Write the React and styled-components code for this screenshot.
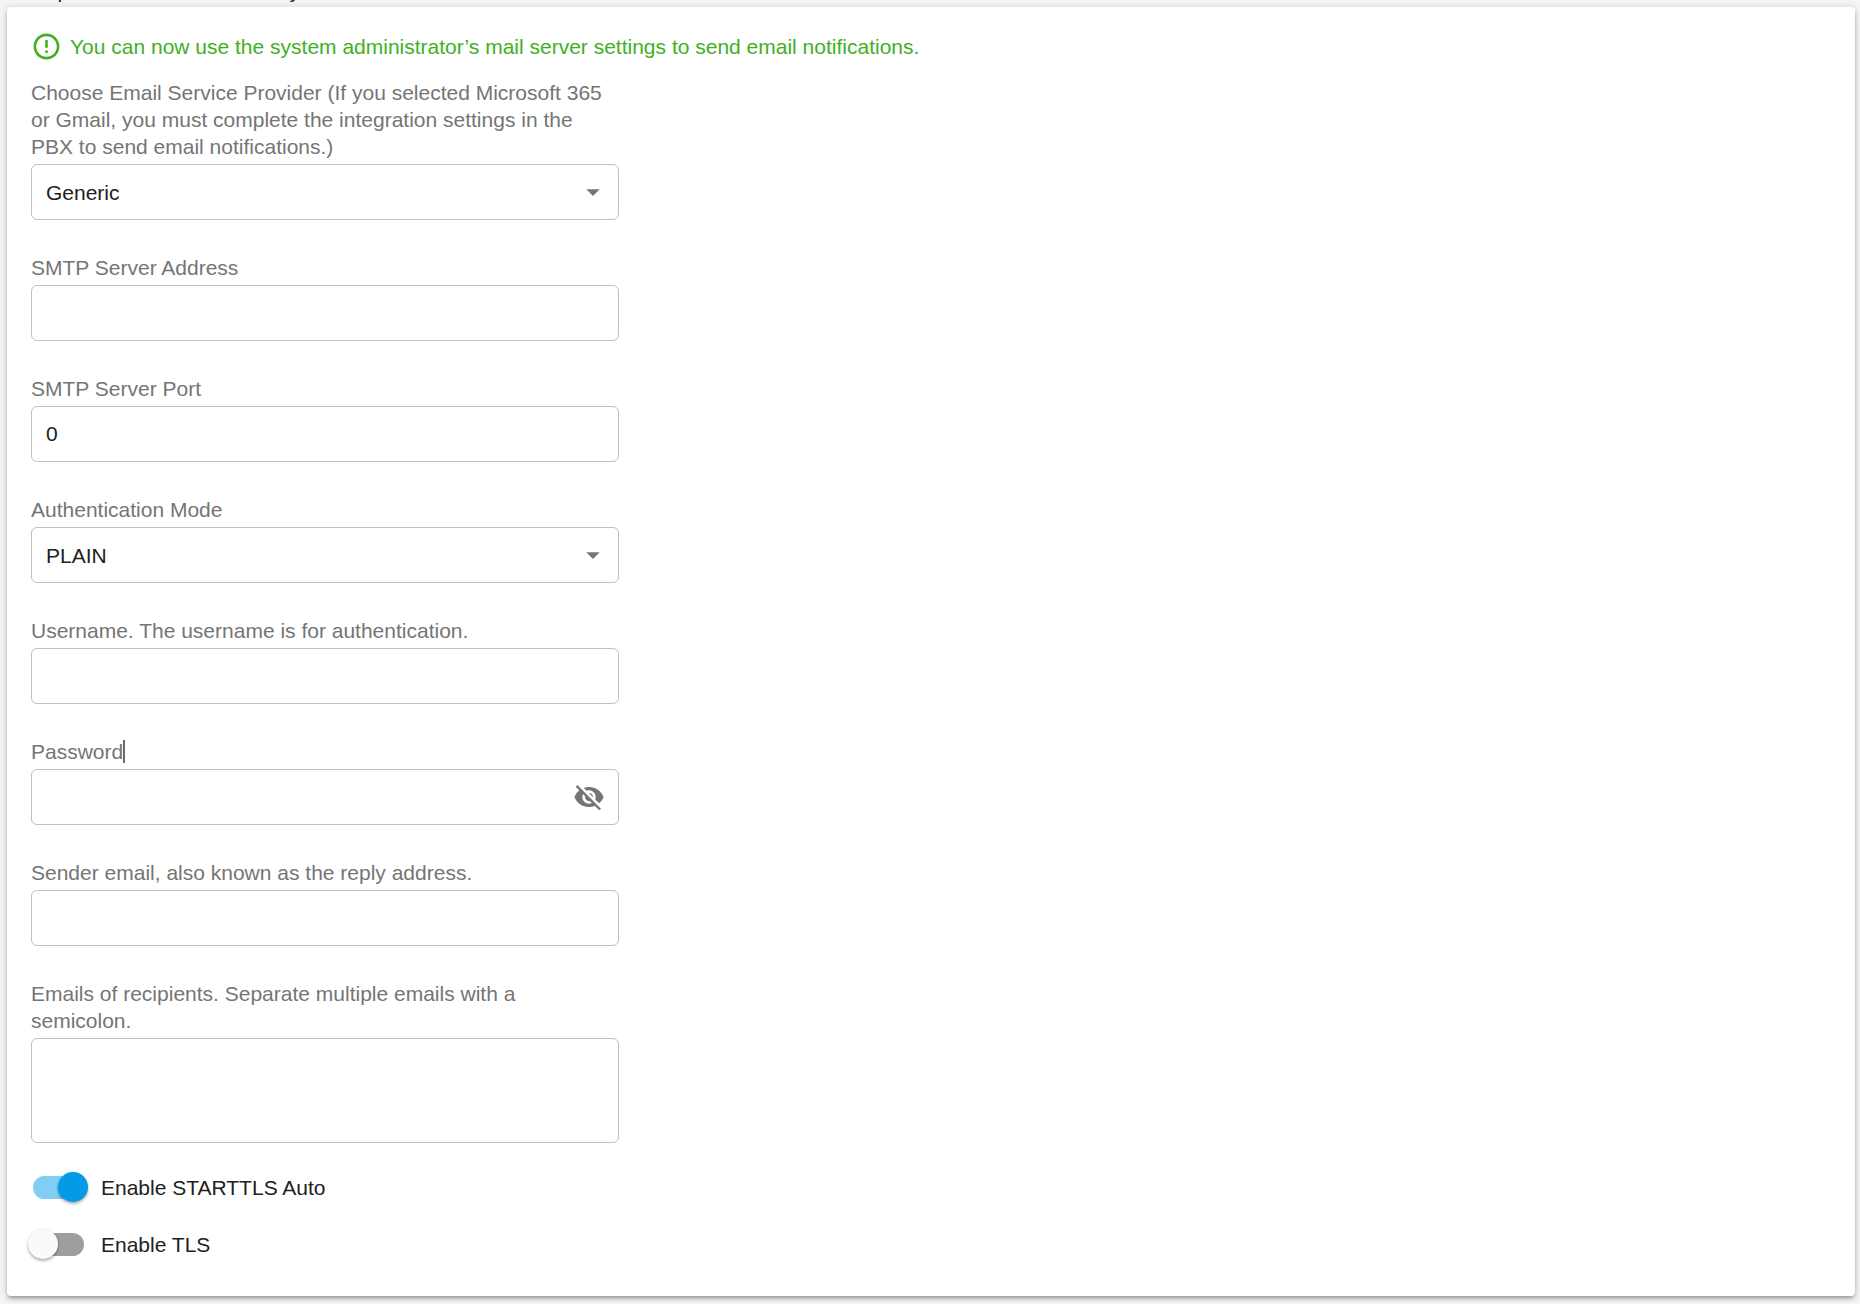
import React, { useState } from "react";
import styled, { createGlobalStyle } from "styled-components";
import { MdErrorOutline, MdVisibility, MdVisibilityOff, MdArrowDropDown } from "react-icons/md";

const GlobalStyle = createGlobalStyle`
  *, *::before, *::after { box-sizing: border-box; }
  body {
    margin: 0;
    background: #f4f5f7;
    color: #212121;
    font: 21px/27px "Liberation Sans", Arial, sans-serif;
  }
`;

const Page = styled.main`
  display: flex;
  flex-direction: column;
  overflow: hidden;
  padding: 0 5px 8px 7px;
`;

const Heading = styled.h1`
  margin: -23px 0 3px;
  padding-left: 19px;
  font-size: 21px;
  font-weight: 400;
  line-height: 27px;
  color: #1a2033;
`;

const Card = styled.form`
  display: flex;
  flex-direction: column;
  padding: 24px;
  background: #fff;
  border-radius: 4px;
  box-shadow: 0 3px 4px -1px rgba(0, 0, 0, 0.35), 0 1px 8px rgba(0, 0, 0, 0.16);
`;

const Notice = styled.p`
  display: flex;
  align-items: center;
  gap: 8px;
  margin: 0 0 17px;
  color: #3fb01f;
  svg { width: 31px; height: 31px; flex: none; }
`;

const Fields = styled.div`
  display: flex;
  flex-direction: column;
  gap: 34px;
  width: 100%;
  max-width: 588px;
`;

const Field = styled.div`
  display: flex;
  flex-direction: column;
  gap: 4px;
`;

const Label = styled.label`
  color: #757575;
`;

const Caret = styled.span`
  border-right: 2px solid #6b6b6b;
`;

const Outline = styled.div`
  display: grid;
  align-items: center;
  min-height: ${(p) => (p.$tall ? 105 : 56)}px;
  border: 1px solid #c0c0c0;
  border-radius: 6px;
  &:focus-within { border-color: #039be5; }
  > * { grid-area: 1 / 1; }
`;

const controlStyle = `
  width: 100%;
  height: 54px;
  margin: 0;
  padding: 0 14px;
  border: 0;
  outline: 0;
  background: transparent;
  color: #212121;
  font: inherit;
`;

const Input = styled.input`${controlStyle}`;
const Select = styled.select`
  ${controlStyle}
  appearance: none;
`;
const TextArea = styled.textarea`
  ${controlStyle}
  display: block;
  height: 103px;
  padding: 12px 14px;
  resize: none;
`;

const Arrow = styled(MdArrowDropDown)`
  justify-self: end;
  width: 32px;
  height: 32px;
  margin-right: 9px;
  color: #757575;
  pointer-events: none;
`;

const IconButton = styled.button`
  display: flex;
  justify-self: end;
  margin-right: 13px;
  padding: 0;
  border: 0;
  background: none;
  color: #757575;
  cursor: pointer;
  svg { width: 32px; height: 32px; }
`;

const Switches = styled.div`
  display: flex;
  flex-direction: column;
  align-items: flex-start;
  gap: 27px;
  padding: 29px 0 13px;
`;

const SwitchRow = styled.label`
  display: flex;
  align-items: center;
  gap: 17px;
  height: 30px;
  padding-left: 2px;
  cursor: pointer;
`;

const Switch = styled.input`
  appearance: none;
  display: flex;
  align-items: center;
  width: 51px;
  height: 23px;
  margin: 0;
  border-radius: 12px;
  background: #9e9e9e;
  cursor: pointer;
  &::before {
    content: "";
    flex: none;
    width: 30px;
    height: 30px;
    margin-left: -5px;
    border-radius: 50%;
    background: #fafafa;
    box-shadow: 0 2px 3px rgba(0, 0, 0, 0.3), 0 0 2px rgba(0, 0, 0, 0.1);
  }
  &:checked { background: #80cef3; }
  &:checked::before { margin-left: 25px; background: #039be5; }
`;

function TextField({ id, label, ...rest }) {
  return (
    <Field>
      <Label htmlFor={id}>{label}</Label>
      <Outline><Input id={id} {...rest} /></Outline>
    </Field>
  );
}

function SelectField({ id, label, options }) {
  return (
    <Field>
      <Label htmlFor={id}>{label}</Label>
      <Outline>
        <Select id={id}>
          {options.map((o) => <option key={o}>{o}</option>)}
        </Select>
        <Arrow />
      </Outline>
    </Field>
  );
}

function PasswordField() {
  const [shown, setShown] = useState(false);
  return (
    <Field>
      <Label htmlFor="password"><Caret>Password</Caret></Label>
      <Outline>
        <Input id="password" type={shown ? "text" : "password"} />
        <IconButton type="button" aria-label="Toggle password visibility" onClick={() => setShown(!shown)}>
          {shown ? <MdVisibility /> : <MdVisibilityOff />}
        </IconButton>
      </Outline>
    </Field>
  );
}

export default function App() {
  return (
    <Page>
      <GlobalStyle />
      <Heading>Step 3: Email Server Delivery</Heading>
      <Card onSubmit={(e) => e.preventDefault()}>
        <Notice>
          <MdErrorOutline />
          <span>You can now use the system administrator’s mail server settings to send email notifications.</span>
        </Notice>
        <Fields>
          <SelectField
            id="provider"
            label="Choose Email Service Provider (If you selected Microsoft 365 or Gmail, you must complete the integration settings in the PBX to send email notifications.)"
            options={["Generic", "Microsoft 365", "Gmail"]}
          />
          <TextField id="address" label="SMTP Server Address" />
          <TextField id="port" label="SMTP Server Port" inputMode="numeric" defaultValue="0" />
          <SelectField id="auth" label="Authentication Mode" options={["PLAIN", "LOGIN"]} />
          <TextField id="username" label="Username. The username is for authentication." />
          <PasswordField />
          <TextField id="sender" type="email" label="Sender email, also known as the reply address." />
          <Field>
            <Label htmlFor="recipients">Emails of recipients. Separate multiple emails with a semicolon.</Label>
            <Outline $tall><TextArea id="recipients" /></Outline>
          </Field>
        </Fields>
        <Switches>
          <SwitchRow><Switch type="checkbox" role="switch" defaultChecked />Enable STARTTLS Auto</SwitchRow>
          <SwitchRow><Switch type="checkbox" role="switch" />Enable TLS</SwitchRow>
        </Switches>
      </Card>
    </Page>
  );
}
